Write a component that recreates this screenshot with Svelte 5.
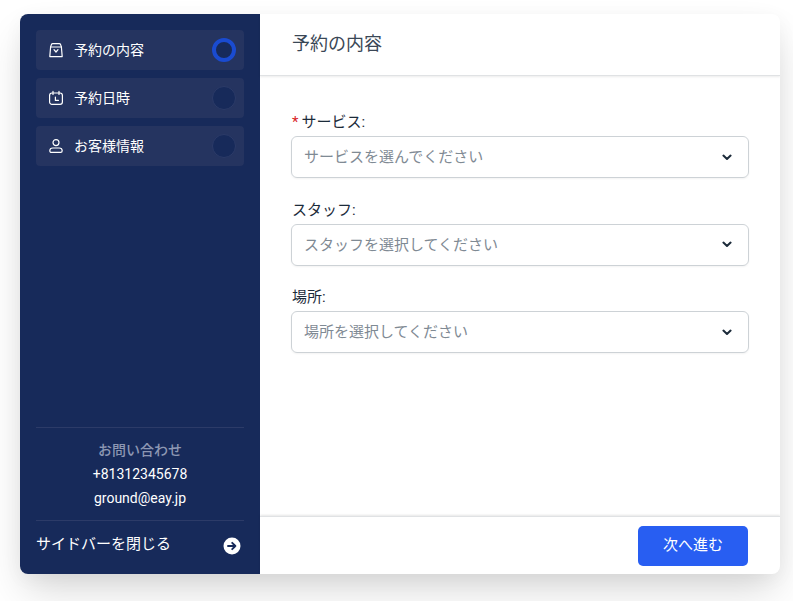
<script>
  const steps = [
    { label: "予約の内容", icon: "bag", active: true },
    { label: "予約日時", icon: "clock", active: false },
    { label: "お客様情報", icon: "user", active: false }
  ];
  const fields = [
    { label: "サービス:", placeholder: "サービスを選んでください", required: true },
    { label: "スタッフ:", placeholder: "スタッフを選択してください", required: false },
    { label: "場所:", placeholder: "場所を選択してください", required: false }
  ];
</script>

<div class="page">
  <div class="card">
    <aside class="sidebar">
      <ul class="steps">
        {#each steps as step}
          <li class="step">
            <svg class="step-icon" viewBox="0 0 16 16" fill="none" stroke="currentColor" stroke-width="1.2" stroke-linecap="round" stroke-linejoin="round">
              {#if step.icon === "bag"}
                <path d="M2.6 5 1.8 14.6h12.4L13.4 5z" />
                <path d="M2.6 5 3.4 2.6C3.6 2 4 1.6 4.8 1.6h6.4c.8 0 1.2.4 1.4 1L13.4 5" />
                <path d="M6 7.6 8 10l2-2.4" />
              {:else if step.icon === "clock"}
                <rect x="1.6" y="3" width="12.8" height="11.4" rx="2.4" />
                <path d="M5 1.4v3M11 1.4v3M7.4 7v3.4h3" />
              {:else}
                <circle cx="8" cy="4.6" r="3" />
                <path d="M1.8 12.8c0-1.7 1.4-2.8 3-2.8h6.4c1.6 0 3 1.1 3 2.8 0 1-.7 1.6-1.6 1.6H3.4c-.9 0-1.6-.6-1.6-1.6z" />
              {/if}
            </svg>
            <span class="step-label">{step.label}</span>
            <span class="dot" class:active={step.active}></span>
          </li>
        {/each}
      </ul>

      <div class="contact">
        <div class="contact-title">お問い合わせ</div>
        <div class="contact-line">+81312345678</div>
        <div class="contact-line">ground@eay.jp</div>
      </div>

      <div class="collapse">
        <span class="collapse-text">サイドバーを閉じる</span>
        <svg class="arrow" viewBox="0 0 18 18">
          <circle cx="9" cy="9" r="8.5" fill="#fff" />
          <path d="M5 9h7.4M9.2 5.8 12.4 9l-3.2 3.2" fill="none" stroke="#172a5a" stroke-width="1.9" stroke-linecap="round" stroke-linejoin="round" />
        </svg>
      </div>
    </aside>

    <main class="main">
      <header class="header">予約の内容</header>

      <div class="form">
        {#each fields as field}
          <div class="field">
            <div class="field-label">
              {#if field.required}<span class="req">*</span>{/if}{field.label}
            </div>
            <div class="select">
              <span class="placeholder">{field.placeholder}</span>
              <svg class="chev" viewBox="0 0 10 7" fill="none" stroke="#1c2b3a" stroke-width="2" stroke-linecap="round" stroke-linejoin="round">
                <path d="M1.4 1.6 5 5l3.6-3.4" />
              </svg>
            </div>
          </div>
        {/each}
      </div>

      <footer class="footer">
        <button class="next">次へ進む</button>
      </footer>
    </main>
  </div>
</div>

<style>
  :global(body) {
    background: #fff;
  }
  .page {
    width: 793px;
    height: 601px;
    box-sizing: border-box;
    padding: 14px 13px 27px 20px;
    overflow: hidden;
    font-family: Roboto, "Noto Sans CJK JP", sans-serif;
  }
  .card {
    display: flex;
    height: 100%;
    border-radius: 8px;
    overflow: hidden;
    background: #fff;
    box-shadow: 0 20px 40px -5px rgba(0, 0, 0, 0.16), 0 5px 20px rgba(0, 0, 0, 0.04);
  }
  .sidebar {
    width: 240px;
    flex: none;
    box-sizing: border-box;
    padding: 16px 16px 0;
    display: flex;
    flex-direction: column;
    background: #172a5a;
    color: #fff;
  }
  .steps {
    list-style: none;
    margin: 0;
    padding: 0;
    flex: 1;
    display: flex;
    flex-direction: column;
    gap: 8px;
  }
  .step {
    height: 40px;
    display: flex;
    align-items: center;
    padding: 0 8px 0 12px;
    border-radius: 4px;
    background: #253460;
    font-size: 14px;
  }
  .step-icon {
    width: 16px;
    height: 16px;
    margin-right: 10px;
  }
  .step-label {
    flex: 1;
    padding-bottom: 2px;
  }
  .dot {
    width: 24px;
    height: 24px;
    box-sizing: border-box;
    border-radius: 50%;
    background: #172a5a;
    border: 1px solid #2c3b68;
  }
  .dot.active {
    border: 4px solid #1a4bd0;
  }
  .contact {
    border-top: 1px solid #2c3b68;
    padding: 12px 0 0;
    height: 93px;
    box-sizing: border-box;
    text-align: center;
    font-size: 14px;
  }
  .contact-title {
    height: 20px;
    line-height: 20px;
    margin-bottom: 4px;
    color: #8d97b3;
    font-weight: 500;
  }
  .contact-line {
    height: 20px;
    line-height: 20px;
    margin-bottom: 4px;
  }
  .collapse {
    border-top: 1px solid #2c3b68;
    height: 54px;
    box-sizing: border-box;
    display: flex;
    justify-content: space-between;
    align-items: center;
    font-size: 15px;
  }
  .collapse-text {
    padding-bottom: 11px;
  }
  .arrow {
    width: 18px;
    height: 18px;
    margin-right: 3px;
    margin-bottom: 4px;
  }
  .main {
    flex: 1;
    display: flex;
    flex-direction: column;
    min-width: 0;
  }
  .header {
    height: 62px;
    box-sizing: border-box;
    padding: 0 32px 6px 32px;
    display: flex;
    align-items: center;
    font-size: 18px;
    color: #3a4756;
    border-bottom: 1px solid #e0e2e4;
    box-shadow: 0 1px 2px rgba(0, 0, 0, 0.08);
  }
  .form {
    flex: 1;
    padding: 35px 31px 0;
    display: flex;
    flex-direction: column;
    gap: 20.5px;
  }
  .field-label {
    height: 22px;
    line-height: 22px;
    margin-bottom: 3px;
    padding-left: 1px;
    font-size: 15px;
    color: #1c2b3a;
  }
  .req {
    color: #d9231f;
    margin-right: 3px;
  }
  .select {
    height: 42px;
    box-sizing: border-box;
    display: flex;
    align-items: center;
    justify-content: space-between;
    padding: 0 16px 0 12px;
    border: 1px solid #cdd2d6;
    border-radius: 6px;
    box-shadow: 0 1px 2px rgba(0, 0, 0, 0.05);
    font-size: 15px;
    color: #7f8a94;
  }
  .placeholder {
    padding-bottom: 3px;
  }
  .chev {
    width: 10px;
    height: 7px;
  }
  .footer {
    height: 58px;
    box-sizing: border-box;
    display: flex;
    justify-content: flex-end;
    align-items: center;
    padding-right: 32px;
    border-top: 1px solid #e0e2e4;
    box-shadow: 0 -1px 2px rgba(0, 0, 0, 0.1);
  }
  .next {
    width: 110px;
    height: 40px;
    border: 0;
    border-radius: 5px;
    background: #285ef2;
    color: #fff;
    font: inherit;
    font-size: 15px;
    padding-bottom: 5px;
  }
</style>
